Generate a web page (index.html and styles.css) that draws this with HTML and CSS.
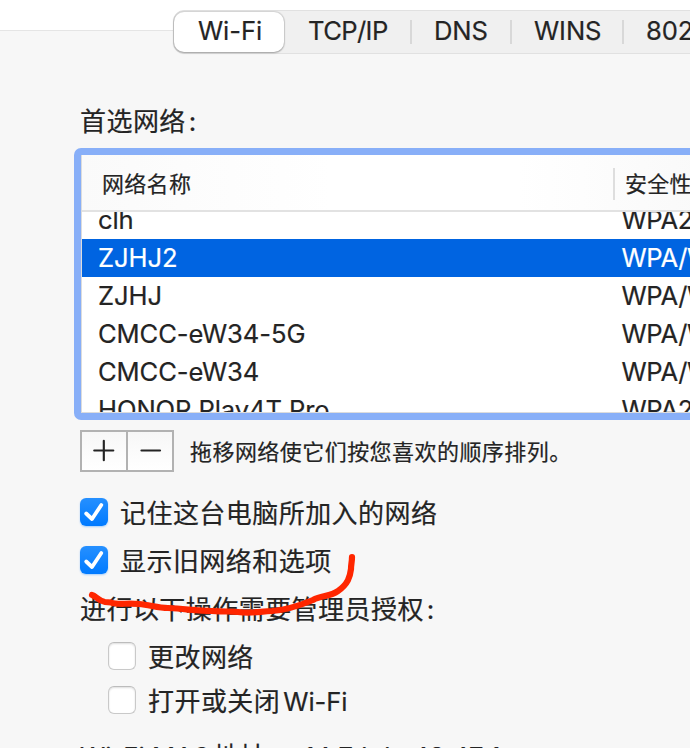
FILE: index.html
```html
<!DOCTYPE html>
<html lang="zh-CN">
<head>
<meta charset="utf-8">
<title>Wi-Fi</title>
<link rel="stylesheet" href="styles.css">
</head>
<body>
<main class="window">
  <header class="toolbar">
    <nav class="tabs">
      <span class="tab tab-active">Wi-Fi</span>
      <span class="tab tab-tcp">TCP/IP</span>
      <span class="tab tab-dns">DNS</span>
      <span class="tab tab-wins">WINS</span>
      <span class="tab tab-8021x">802</span>
    </nav>
  </header>
  <section class="content">
    <h1 class="heading">首选网络<span class="colon">:</span></h1>
    <div class="table">
      <div class="thead"><span class="th">网络名称</span><span class="th th-security">安全性</span></div>
      <div class="rows">
        <div class="row"><span>clh</span><span class="security">WPA2</span></div>
        <div class="row selected"><span>ZJHJ2</span><span class="security">WPA/WPA2</span></div>
        <div class="row"><span>ZJHJ</span><span class="security">WPA/WPA2</span></div>
        <div class="row"><span>CMCC-eW34-5G</span><span class="security">WPA/WPA2</span></div>
        <div class="row"><span>CMCC-eW34</span><span class="security">WPA/WPA2</span></div>
        <div class="row"><span>HONOR Play4T Pro</span><span class="security">WPA2</span></div>
      </div>
    </div>
    <div class="controls">
      <div class="buttons">
        <svg class="btn" viewBox="0 0 44 38"><path d="M11.5 18.5h19.5M21.3 8.5v20"/></svg>
        <svg class="btn" viewBox="0 0 44 38"><path d="M13.5 18.5h18.5"/></svg>
      </div>
      <span class="hint">拖移网络使它们按您喜欢的顺序排列。</span>
    </div>
    <div class="option">
      <svg class="check" viewBox="0 0 28 28"><path d="M6.2 15.5L12 21L21.3 7"/></svg>
      <span class="caption">记住这台电脑所加入的网络</span>
    </div>
    <div class="option">
      <svg class="check" viewBox="0 0 28 28"><path d="M6.2 15.5L12 21L21.3 7"/></svg>
      <span class="caption">显示旧网络和选项</span>
    </div>
    <p class="admin">进行以下操作需要管理员授权<span class="colon">:</span></p>
    <div class="option nested"><i class="box"></i><span class="caption">更改网络</span></div>
    <div class="option nested"><i class="box"></i><span class="caption">打开或关闭<span class="latin">Wi-Fi</span></span></div>
    <div class="address"><span class="address-label">Wi-Fi MAC<span class="cjk">地址</span>:</span><span>14:7d:da:48:47:1</span></div>
  </section>
  <svg class="stroke" viewBox="80 550 280 70"><path d="M92 595C96 596 98 601 105 602L111 602.5C116 605 126 603 139 604C150 605 158 608 168 608C187 609 197 611 212 611C226 612 231 611 238 612C253 614 261 611 272 611C288 610 301 605 313 600C322 595 330 597 338 591C348 584 350 577 351 569C351 564 352 562 352 557"/></svg>
</main>
</body>
</html>
```

FILE: styles.css
```css
* { box-sizing: border-box; }
body { margin: 0; }
.window {
  position: relative;
  width: 690px;
  height: 748px;
  overflow: hidden;
  background: #f7f7f7;
  color: #242424;
  font: 25.6px/38px Inter, "Noto Sans CJK SC", sans-serif;
  letter-spacing: -.1px;
  -webkit-text-stroke: .2px currentColor;
  white-space: nowrap;
}
.toolbar {
  height: 31px;
  padding: 10px 0 0 173px;
  background: #fff;
  border-bottom: 1px solid #e5e5e5;
}
.tabs {
  display: flex;
  width: 560px;
  height: 44px;
  background: #f0f0f0;
  border: 1px solid #e1e1e1;
  border-radius: 11px;
}
.tab { height: 42px; line-height: 40px; }
.tab-active {
  width: 110px;
  height: 40px;
  margin-top: 1px;
  padding-left: 24px;
  line-height: 38px;
  background: #fff;
  border-radius: 10px;
  box-shadow: 0 0 1px 1px #0000001c, 0 1px 2px #00000040;
}
.tab-tcp { width: 126px; padding-left: 24px; letter-spacing: -.6px; }
.tab-dns { width: 100px; padding-left: 24px; }
.tab-wins { width: 112px; padding-left: 24px; }
.tab-8021x { padding-left: 24px; }
.tab-dns, .tab-wins, .tab-8021x {
  background: linear-gradient(#d8d8d8, #d8d8d8) 0 9px / 2px 24px no-repeat;
}
.content { padding: 71px 0 0 80px; }
.heading, .admin, .option {
  margin: 0;
  font-size: 26px;
  font-weight: 400;
  letter-spacing: .45px;
}
.heading { height: 46px; line-height: 39px; }
.colon { margin-left: 3px; }
.table {
  width: 640px;
  height: 272px;
  margin-left: -6px;
  border: 7px solid #88aff8;
  border-radius: 7px;
  background: #fff;
  box-shadow: inset 0 0 0 1px #dcdcdc;
}
.thead {
  display: grid;
  grid-template-columns: 531px 1fr;
  height: 57px;
  margin: 0 1px;
  padding-top: 13px;
  border-bottom: 2px solid #e2e2e2;
  background: linear-gradient(90deg, #fafafa, #fff 40%, #fff 70%, #f9f9f9);
  background-clip: padding-box;
  font-size: 22px;
  line-height: 32px;
  letter-spacing: .3px;
}
.th { height: 32px; padding-left: 20px; }
.th-security { padding-left: 10px; border-left: 2px solid #dedede; }
.rows { height: 200px; margin-left: 1px; overflow: hidden; }
.row {
  display: grid;
  grid-template-columns: 523.5px 1fr;
  height: 38px;
  padding-left: 16px;
  line-height: 38px;
}
.row:first-child { margin-top: -11px; }
.security { letter-spacing: -.4px; }
.selected { background: #0064e1; color: #fff; }
.controls { display: flex; height: 42px; margin-top: 10px; }
.buttons {
  display: flex;
  width: 94px;
  border: 2px solid #b2b2b2;
  background: linear-gradient(#f7f7f7, #fff);
}
.btn { width: 44px; height: 38px; fill: none; stroke: #242424; stroke-width: 2.2; stroke-linecap: round; }
.btn + .btn { width: 46px; border-left: 2px solid #b2b2b2; }
.btn:first-child { padding-left: 1px; }
.hint { margin-left: 16px; font-size: 22px; line-height: 44px; letter-spacing: .45px; }
.option { display: flex; align-items: center; gap: 12px; height: 48px; }
.caption { padding-top: 3px; }
.controls + .option { margin-top: 16px; }
.check {
  width: 28px;
  height: 28px;
  border-radius: 6px;
  background: linear-gradient(#2690ff, #007aff);
  box-shadow: 0 1px 2px #007aff55;
  fill: none;
  stroke: #fff;
  stroke-width: 3.8;
  stroke-linecap: round;
  stroke-linejoin: round;
}
.admin { height: 46px; line-height: 51px; }
.nested { height: 44px; margin-left: 28px; }
.nested .caption { padding-top: 3px; }
.admin + .nested { margin-top: 4px; }
.box {
  width: 28px;
  height: 28px;
  border: 1px solid #c9c9c9;
  border-top-color: #bcbcbc;
  border-radius: 6px;
  background: #fff;
  box-shadow: inset 0 1px 2px #00000022;
}
.latin { margin-left: 3px; font-size: 25.6px; letter-spacing: -.1px; }
.address { display: flex; margin-top: 16px; height: 38px; letter-spacing: .05px; }
.address-label { width: 224px; }
.cjk { font-size: 26px; margin-left: 3px; }
.stroke {
  position: absolute;
  left: 80px;
  top: 550px;
  width: 280px;
  height: 70px;
  fill: none;
  stroke: #ff2600;
  stroke-width: 6.2;
  stroke-linecap: round;
  stroke-linejoin: round;
}
```
